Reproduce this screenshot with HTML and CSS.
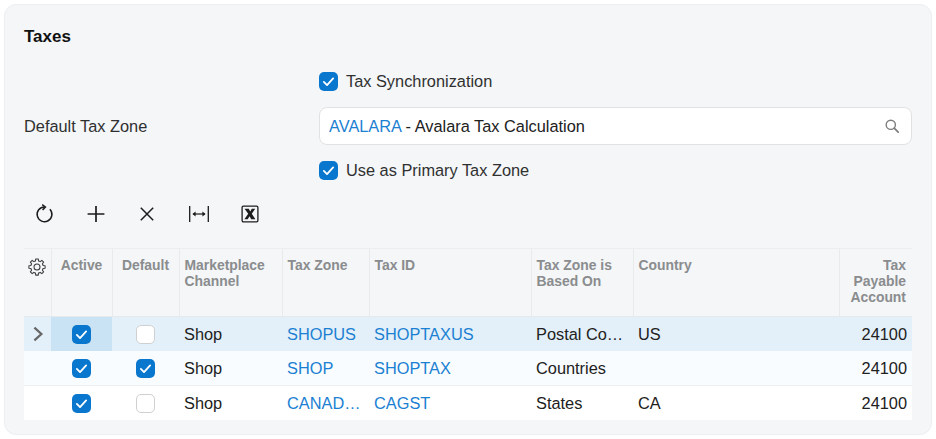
FILE: index.html
```html
<!DOCTYPE html>
<html lang="en">
<head>
<meta charset="utf-8">
<title>Taxes</title>
<link rel="stylesheet" href="styles.css">
</head>
<body>
<svg class="defs" width="0" height="0" aria-hidden="true">
  <symbol id="tick" viewBox="0 0 18 18"><path d="M4.6 9.4l3 3 5.8-6.4" fill="none" stroke="#fff" stroke-width="1.7" stroke-linecap="round" stroke-linejoin="round"/></symbol>
</svg>
<main class="panel">
  <h2 class="title">Taxes</h2>
  <div class="form">
    <div class="form-row form-row-check">
      <span class="label"></span>
      <span class="check-field"><span class="cb on"><svg><use href="#tick"/></svg></span>Tax Synchronization</span>
    </div>
    <div class="form-row form-row-input">
      <span class="label">Default Tax Zone</span>
      <div class="input"><span><a class="link">AVALARA</a> - Avalara Tax Calculation</span>
        <svg class="search" width="16" height="16" viewBox="0 0 16 16"><circle cx="6.8" cy="6.8" r="4.6" fill="none" stroke="#7d7d7d" stroke-width="1.4"/><path d="M10.2 10.2l4 4" stroke="#7d7d7d" stroke-width="1.7" stroke-linecap="round"/></svg>
      </div>
    </div>
    <div class="form-row form-row-check">
      <span class="label"></span>
      <span class="check-field"><span class="cb on"><svg><use href="#tick"/></svg></span>Use as Primary Tax Zone</span>
    </div>
  </div>
  <div class="toolbar">
    <button class="tool"><svg width="20" height="20" viewBox="0 0 20 20"><path d="M10.5 2.9A7.4 7.4 0 1 0 15.9 5.2" fill="none" stroke="#1c1c1c" stroke-width="1.5"/><path d="M8.2.6l3.2 2.4-2.8 3" fill="none" stroke="#1c1c1c" stroke-width="1.5"/></svg></button>
    <button class="tool"><svg width="20" height="20" viewBox="0 0 20 20"><path d="M10 2v16M1.6 10h16.8" stroke="#1c1c1c" stroke-width="1.7"/></svg></button>
    <button class="tool"><svg width="20" height="20" viewBox="0 0 20 20"><path d="M3.8 3.8l12.4 12.4M16.2 3.8L3.8 16.2" stroke="#1c1c1c" stroke-width="1.5"/></svg></button>
    <button class="tool"><svg width="20" height="20" viewBox="0 0 20 20"><path d="M.7 2v16M19.3 2v16" stroke="#1c1c1c" stroke-width="1.3"/><path d="M4 10h12" stroke="#1c1c1c" stroke-width="1.2"/><path d="M6.6 7.6L3.4 10l3.2 2.4zM13.4 7.6l3.2 2.4-3.2 2.4z" fill="#1c1c1c"/></svg></button>
    <button class="tool"><svg width="20" height="20" viewBox="0 0 20 20"><rect x="2.1" y="2.1" width="15.8" height="15.8" rx="1.3" fill="none" stroke="#1c1c1c" stroke-width="1.3"/><path d="M4.6 4.8h4.2l1.4 2.6 1.6-2.6h3.4l-3.4 4.9 3.6 5.5h-4.2l-1.6-3-1.9 3H4.4l3.8-5.4z" fill="#1c1c1c"/></svg></button>
  </div>
  <table class="grid">
    <colgroup>
      <col class="c-exp"><col class="c-act"><col class="c-def"><col class="c-chan"><col class="c-zone"><col class="c-id"><col class="c-based"><col class="c-country"><col class="c-acct">
    </colgroup>
    <thead>
      <tr>
        <th class="th-gear"><svg width="18" height="18" viewBox="0 0 18 18"><path transform="translate(9 9)" d="M6.11-1.52L8.1-1.28V1.28L6.11 1.52L5.4 3.25L6.63 4.82L4.82 6.63L3.25 5.4L1.52 6.11L1.28 8.1H-1.28L-1.52 6.11L-3.25 5.4L-4.82 6.63L-6.63 4.82L-5.4 3.25L-6.11 1.52L-8.1 1.28V-1.28L-6.11-1.52L-5.4-3.25L-6.63-4.82L-4.82-6.63L-3.25-5.4L-1.52-6.11L-1.28-8.1H1.28L1.52-6.11L3.25-5.4L4.82-6.63L6.63-4.82L5.4-3.25Z" fill="none" stroke="#3c3c3c" stroke-width="1.05" stroke-linejoin="round"/><circle cx="9" cy="9" r="3" fill="none" stroke="#3c3c3c" stroke-width="1.05"/></svg></th>
        <th class="center">Active</th>
        <th class="center">Default</th>
        <th>Marketplace Channel</th>
        <th>Tax Zone</th>
        <th>Tax ID</th>
        <th>Tax Zone is Based On</th>
        <th>Country</th>
        <th class="right">Tax Payable Account</th>
      </tr>
    </thead>
    <tbody>
      <tr class="row-current">
        <td class="expander"><svg width="12" height="18" viewBox="0 0 12 18"><path d="M2.4 2.6l7 6.4-7 6.4" fill="none" stroke="#666" stroke-width="2.2"/></svg></td>
        <td class="center cell-focus"><span class="cb on"><svg><use href="#tick"/></svg></span></td>
        <td class="center"><span class="cb"></span></td>
        <td>Shop</td>
        <td><a class="link">SHOPUS</a></td>
        <td><a class="link">SHOPTAXUS</a></td>
        <td>Postal Co…</td>
        <td>US</td>
        <td class="right">24100</td>
      </tr>
      <tr class="row-alt">
        <td></td>
        <td class="center"><span class="cb on"><svg><use href="#tick"/></svg></span></td>
        <td class="center"><span class="cb on"><svg><use href="#tick"/></svg></span></td>
        <td>Shop</td>
        <td><a class="link">SHOP</a></td>
        <td><a class="link">SHOPTAX</a></td>
        <td>Countries</td>
        <td></td>
        <td class="right">24100</td>
      </tr>
      <tr>
        <td></td>
        <td class="center"><span class="cb on"><svg><use href="#tick"/></svg></span></td>
        <td class="center"><span class="cb"></span></td>
        <td>Shop</td>
        <td><a class="link">CANAD…</a></td>
        <td><a class="link">CAGST</a></td>
        <td>States</td>
        <td>CA</td>
        <td class="right">24100</td>
      </tr>
    </tbody>
  </table>
</main>
</body>
</html>
```
FILE: styles.css
```css
* { box-sizing: border-box; }
html, body { margin: 0; padding: 0; background: #fff; }
body {
  padding: 4px;
  font-family: "Liberation Sans", Arial, sans-serif;
  color: #212121;
  font-size: 16.35px;
}
.defs { position: absolute; }
.panel {
  width: 928px;
  height: 431px;
  background: #f4f6f8;
  border: 1px solid #eceef0;
  border-radius: 12px;
  padding: 20px 19px 0 19px;
}
.title {
  margin: 0;
  font-size: 17px;
  font-weight: 700;
  line-height: 24px;
  color: #111;
}
.form { margin-top: 19px; }
.form-row { display: grid; grid-template-columns: 295px 1fr; align-items: center; }
.form-row-check { height: 26px; }
.form-row-input { height: 38px; margin: 13px 0 12px; }
.label { color: #303030; }
.check-field { display: flex; align-items: center; gap: 8px; color: #303030; }
.cb {
  display: inline-block;
  width: 19px;
  height: 19px;
  border-radius: 5px;
  background: #fff;
  border: 1.5px solid #cfd0d1;
  vertical-align: middle;
}
.cb.on { background: #0a77cf; border: 0; }
.cb svg { display: block; width: 19px; height: 19px; }
.input {
  height: 38px;
  background: #fff;
  border: 1px solid #e0e2e4;
  border-radius: 8px;
  padding: 0 11px 0 9px;
  display: flex;
  align-items: center;
  justify-content: space-between;
}
.link { color: #1b80d2; }
.search { display: block; }
.toolbar { display: flex; margin-top: 8px; height: 46px; align-items: center; margin-left: 3px; }
.tool {
  width: 34px;
  height: 32px;
  padding: 0;
  margin-right: 17.6px;
  background: none;
  border: 0;
  display: flex;
  align-items: center;
  justify-content: center;
}
.grid {
  width: 888px;
  table-layout: fixed;
  border-collapse: collapse;
  margin-top: 11px;
}
.c-exp { width: 27px; }
.c-act { width: 61px; }
.c-def { width: 67px; }
.c-chan { width: 103px; }
.c-zone { width: 87px; }
.c-id { width: 162px; }
.c-based { width: 102px; }
.c-country { width: 206px; }
.c-acct { width: 73px; }
th {
  height: 68px;
  padding: 8px 5px 0;
  vertical-align: top;
  text-align: left;
  font-size: 13.9px;
  line-height: 16px;
  font-weight: 700;
  color: #8a8c8e;
  border-top: 1px solid #eceef0;
  border-left: 1px solid #e8eaec;
  border-bottom: 1px solid #e6e9ec;
}
th:first-child { border-left: 0; }
th.right { padding-right: 6px; }
th.th-gear { padding: 9px 0 0 4px; }
th.th-gear svg { display: block; }
td {
  height: 34.4px;
  padding: 1px 5px 0;
  background: #fff;
  border-bottom: 1px solid #eef1f3;
  white-space: nowrap;
  overflow: hidden;
  color: #212121;
}
th.center, td.center { text-align: center; padding-left: 0; padding-right: 0; }
td.center { padding-top: 0; }
.right { text-align: right; }
.row-current td { background: #e3f0f9; border-bottom: 0; }
.row-current td.cell-focus { background: #c9e2f4; }
.row-alt td { background: #f8fcff; }
tbody tr:last-child td { border-bottom: 0; }
td.expander { padding: 0 0 0 8px; }
td.expander svg { display: block; }
```
